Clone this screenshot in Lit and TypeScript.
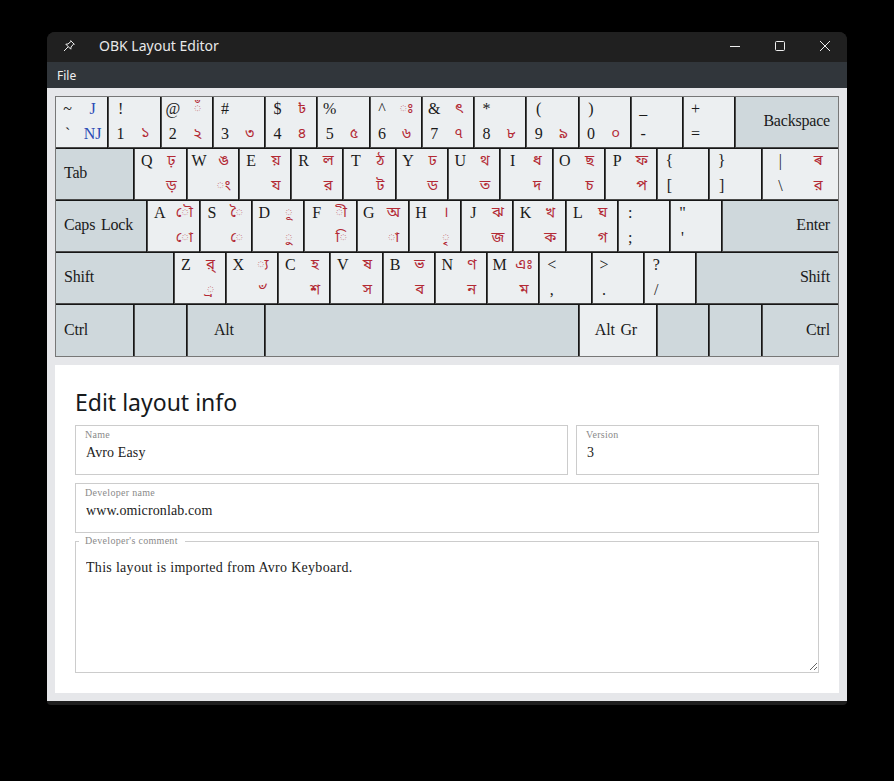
import { LitElement, html, css } from "lit";
import { customElement } from "lit/decorators.js";

type Key = { s: number; tl?: string; tr?: string; bl?: string; br?: string; label?: string; align?: string; mod?: boolean; blue?: boolean };
const k = (tl: string, bl: string, tr = "", br = ""): Key => ({ s: 4, tl, bl, tr, br });
const m = (s: number, label: string, align = "left", mod = true): Key => ({ s, label, align, mod });

const ROWS: Key[][] = [
  [
    { s: 4, tl: "~", bl: "`", tr: "J", br: "NJ", blue: true },
    k("!", "1", "", "১"), k("@", "2", "◌ঁ", "২"), k("#", "3", "", "৩"), k("$", "4", "৳", "৪"), k("%", "5", "", "৫"),
    k("^", "6", "◌ঃ", "৬"), k("&", "7", "ৎ", "৭"), k("*", "8", "", "৮"), k("(", "9", "", "৯"), k(")", "0", "", "০"),
    k("_", "-"), k("+", "="), m(8, "Backspace", "right"),
  ],
  [
    m(6, "Tab"),
    k("Q", "", "ঢ়", "ড়"), k("W", "", "ঙ", "◌ং"), k("E", "", "য়", "য"), k("R", "", "ল", "র"), k("T", "", "ঠ", "ট"),
    k("Y", "", "ঢ", "ড"), k("U", "", "থ", "ত"), k("I", "", "ধ", "দ"), k("O", "", "ছ", "চ"), k("P", "", "ফ", "প"),
    k("{", "["), k("}", "]"), { s: 6, tl: "|", bl: "\\", tr: "ৰ", br: "র" },
  ],
  [
    m(7, "Caps Lock"),
    k("A", "", "◌ৌ", "◌ো"), k("S", "", "◌ৈ", "◌ে"), k("D", "", "◌ূ", "◌ু"), k("F", "", "◌ী", "◌ি"), k("G", "", "অ", "◌া"),
    k("H", "", "।", "◌ৃ"), k("J", "", "ঝ", "জ"), k("K", "", "খ", "ক"), k("L", "", "ঘ", "গ"),
    k(":", ";"), k("\"", "'"), m(9, "Enter", "right"),
  ],
  [
    m(9, "Shift"),
    k("Z", "", "র্", "◌্র"), k("X", "", "◌্য", "৺"), k("C", "", "হ", "শ"), k("V", "", "ষ", "স"), k("B", "", "ভ", "ব"),
    k("N", "", "ণ", "ন"), k("M", "", "এঃ", "ম"), k("<", ","), k(">", "."), k("?", "/"), m(11, "Shift", "right"),
  ],
  [
    m(6, "Ctrl"), m(4, ""), m(6, "Alt", "center"), m(24, ""), m(6, "Alt Gr", "center", false), m(4, ""), m(4, ""), m(6, "Ctrl", "right"),
  ],
];

@customElement("app-root")
export class AppRoot extends LitElement {
  static styles = css`
    :host { display: block; width: 894px; height: 781px; background: #000; overflow: hidden; }
    * { box-sizing: border-box; }
    .stage { padding: 32px 47px 0; }
    .window { width: 800px; height: 673px; border-radius: 8px 8px 4px 4px; overflow: hidden; background: #1f1f1f; display: flex; flex-direction: column; }
    .titlebar { height: 30px; flex: none; display: flex; align-items: center; color: #e8e8e8; font: 14px "Noto Sans", "Open Sans", sans-serif; background: #202020; padding-bottom: 2px; }
    .pin { width: 14px; height: 14px; margin-left: 15px; flex: none; }
    .title { margin-left: 23px; flex: 1; padding-bottom: 1px; }
    .ctl { width: 45px; height: 28px; display: flex; align-items: center; justify-content: center; flex: none; }
    .ctl svg { width: 12px; height: 12px; }
    .menubar { height: 26px; flex: none; background: #31363b; color: #f0f0f0; font: 12px "Noto Sans", "Open Sans", sans-serif; display: flex; align-items: center; padding-left: 10px; }
    .content { flex: none; height: 613px; background: #e6e7ea; padding: 8px; display: flex; flex-direction: column; gap: 8px; }
    .keyboard { display: grid; grid-template-columns: repeat(60, 1fr); grid-auto-rows: 1fr; height: 261px; flex: none; padding-top: 1px; background: #eceff1; outline: 1px solid #777; outline-offset: -1px; font-family: "Liberation Serif", serif; }
    .key { border-left: 1px solid #161616; border-bottom: 1px solid #161616; box-shadow: inset 1px 0 0 #4a4a4a, inset 0 -1px 0 #4a4a4a; background: #eceff1; color: #1a1a1a; font-size: 16px; line-height: 20px; min-width: 0; display: grid; grid-template-columns: 1fr 1fr; grid-template-rows: 1fr 1fr; place-items: center; padding: 0 2px 2px 0; }
    .key.first { border-left: 0; box-shadow: inset 0 -1px 0 #4a4a4a; }
    .key.last { border-bottom: 0; box-shadow: inset 1px 0 0 #4a4a4a; }
    .key.first.last { box-shadow: none; }
    .key.mod { background: #cfd8dc; }
    .key.label { display: flex; align-items: center; padding: 0 9px 3px 9px; letter-spacing: -0.2px; word-spacing: 2px; }
    .left { justify-content: flex-start; }
    .right { justify-content: flex-end; }
    .key.label.center { justify-content: center; padding-right: 12px; }
    .red { color: #b32a35; font-family: "Noto Sans Bengali", "Noto Serif Bengali", "Lohit Bengali", "Liberation Serif", serif; font-size: 15px; }
    .blue { color: #2a4ab5; font-size: 16px; }
    .panel { flex: 1; background: #fff; padding: 20px; display: flex; flex-direction: column; gap: 8px; min-height: 0; }
    h1 { margin: 2px 0 0; font: 400 23px/30px "Noto Sans", "Open Sans", sans-serif; color: #16191c; height: 30px; display: flex; align-items: center; }
    .row { display: flex; gap: 8px; }
    .field { border: 1px solid #ccc; height: 50px; padding: 3px 10px 0; display: flex; flex-direction: column; font-family: "Liberation Serif", serif; flex: none; }
    .grow { flex: 1; }
    .version { width: 243px; }
    .field label, legend { font-size: 10px; line-height: 12px; color: #8a8a8a; letter-spacing: 0.3px; }
    .field label { margin-left: -1px; }
    input, textarea { border: 0; outline: 0; padding: 0; margin: 0; background: transparent; font: 14px/20px "Liberation Serif", serif; color: #222; width: 100%; }
    input { margin-top: 1px; height: 22px; letter-spacing: 0.12px; }
    fieldset { margin: -6px 0 0; border: 1px solid #ccc; padding: 0 0 0 10px; height: 138px; min-width: 0; font-family: "Liberation Serif", serif; flex: none; }
    legend { padding: 0 7px 0 6px; margin-left: -7px; }
    textarea { display: block; height: 124px; padding-top: 11px; resize: both; letter-spacing: 0.3px; }
  `;

  private renderKey(key: Key, first: boolean, last: boolean) {
    const style = `grid-column: span ${key.s}`;
    const pos = `${first ? "first" : ""} ${last ? "last" : ""}`;
    if (key.label !== undefined) {
      return html`<div class="key label ${key.mod ? "mod" : ""} ${key.align} ${pos}" style=${style}>${key.label}</div>`;
    }
    const c = key.blue ? "blue" : "red";
    return html`<div class="key ${pos}" style=${style}>
      <span>${key.tl}</span><span class=${c}>${key.tr}</span>
      <span>${key.bl}</span><span class=${c}>${key.br}</span>
    </div>`;
  }

  render() {
    return html`<div class="stage"><div class="window">
      <div class="titlebar">
        <svg class="pin" viewBox="0 0 14 14" fill="none" stroke="#eee" stroke-width="1">
          <path d="M8.5 1.5l4 4M9.2 2.2L6 5 3.8 5.2 8.8 10.2 9 8l2.8-3.2M6.2 7.8L2 12"/>
        </svg>
        <div class="title">OBK Layout Editor</div>
        <div class="ctl"><svg viewBox="0 0 12 12" stroke="#eee" stroke-width="1"><path d="M1 6.5h10"/></svg></div>
        <div class="ctl"><svg viewBox="0 0 12 12" stroke="#eee" stroke-width="1" fill="none"><rect x="1.5" y="1.5" width="9" height="9" rx="1"/></svg></div>
        <div class="ctl"><svg viewBox="0 0 12 12" stroke="#eee" stroke-width="1"><path d="M1 1l10 10M11 1L1 11"/></svg></div>
      </div>
      <div class="menubar">File</div>
      <div class="content">
        <div class="keyboard">${ROWS.map((r, ri) => r.map((x, i) => this.renderKey(x, i === 0, ri === ROWS.length - 1)))}</div>
        <div class="panel">
          <h1>Edit layout info</h1>
          <div class="row">
            <div class="field grow"><label>Name</label><input value="Avro Easy" /></div>
            <div class="field version"><label>Version</label><input value="3" /></div>
          </div>
          <div class="field"><label>Developer name</label><input value="www.omicronlab.com" /></div>
          <fieldset><legend>Developer's comment</legend><textarea>This layout is imported from Avro Keyboard.</textarea></fieldset>
        </div>
      </div>
    </div></div>`;
  }
}
